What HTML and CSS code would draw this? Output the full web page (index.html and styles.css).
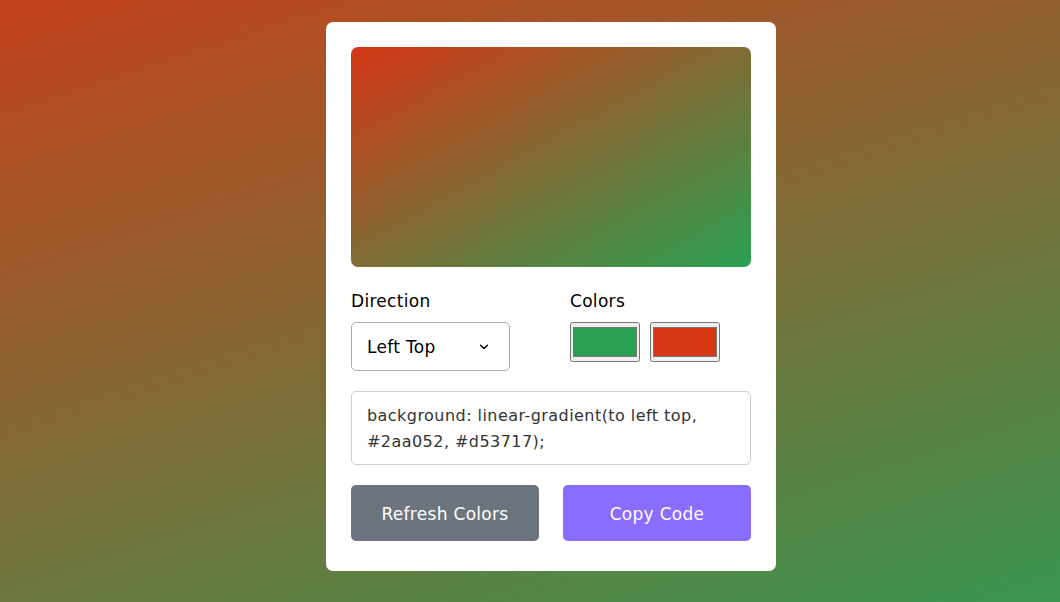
FILE: index.html
```html
<!DOCTYPE html>
<html lang="en">
<head>
<meta charset="utf-8">
<title>Gradient Generator</title>
<link rel="stylesheet" href="styles.css">
</head>
<body>
<div class="wrapper">
  <div class="gradient-box"></div>
  <div class="row options">
    <div class="column direction">
      <p class="label">Direction</p>
      <div class="select-box">
        <select>
          <option value="to top">Top</option>
          <option value="to right top">Right Top</option>
          <option value="to right">Right</option>
          <option value="to right bottom">Right Bottom</option>
          <option value="to bottom">Bottom</option>
          <option value="to left bottom">Left Bottom</option>
          <option value="to left">Left</option>
          <option value="to left top" selected>Left Top</option>
        </select>
        <svg class="chevron" width="10" height="6" viewBox="0 0 10 6"><path d="M1.5 1.2 5 4.6 8.5 1.2" fill="none" stroke="#000" stroke-width="1.4" stroke-linecap="round" stroke-linejoin="round"/></svg>
      </div>
    </div>
    <div class="column palette">
      <p class="label">Colors</p>
      <div class="colors">
        <input type="color" value="#2aa052">
        <input type="color" value="#d53717">
      </div>
    </div>
  </div>
  <textarea class="row" disabled>background: linear-gradient(to left top, #2aa052, #d53717);</textarea>
  <div class="row buttons">
    <button class="refresh">Refresh Colors</button>
    <button class="copy">Copy Code</button>
  </div>
</div>
</body>
</html>
```
FILE: styles.css
```css
* {
  margin: 0;
  padding: 0;
  box-sizing: border-box;
  font-family: "DejaVu Sans", "Inter", sans-serif;
}
body {
  min-height: 100vh;
  display: flex;
  justify-content: center;
  align-items: flex-start;
  padding: 22px 0 0 42px;
  background: linear-gradient(162deg, #c4421d, #3a9550);
}
.wrapper {
  width: 450px;
  background: #fff;
  border-radius: 7px;
  padding: 25px 25px 30px;
}
.gradient-box {
  height: 220px;
  width: 100%;
  border-radius: 7px;
  background: linear-gradient(to left top, #2aa052, #d53717);
}
.row {
  display: flex;
  margin-top: 20px;
  justify-content: space-between;
}
.options .column {
  width: 159px;
}
.options .palette {
  width: 181px;
}
.label {
  font-size: 17px;
  letter-spacing: 0.3px;
  color: #000;
  margin-bottom: 9px;
  line-height: 24px;
  padding-top: 2px;
}
.select-box {
  height: 49px;
  border: 1px solid #aaa;
  border-radius: 5px;
  display: flex;
  align-items: center;
  padding-right: 20px;
}
.select-box select {
  flex: 1;
  min-width: 0;
  height: 100%;
  border: none;
  outline: none;
  font-size: 17px;
  letter-spacing: 0.3px;
  background: none;
  padding-left: 15px;
  color: #000;
  appearance: none;
  -webkit-appearance: none;
}
.chevron {
  flex: none;
  margin-top: 1px;
}
.colors {
  display: flex;
  gap: 10px;
}
.colors input {
  width: 70px;
  height: 40px;
  cursor: pointer;
}
textarea {
  width: 100%;
  height: 74px;
  resize: none;
  font-size: 16px;
  letter-spacing: 0.45px;
  line-height: 26px;
  color: #333;
  background: #fff;
  padding: 11px 15px 9px;
  border: 1px solid #ccc;
  border-radius: 5px;
}
.buttons button {
  width: calc(100% / 2 - 12px);
  height: 56px;
  border: none;
  border-radius: 5px;
  color: #fff;
  font-size: 17px;
  letter-spacing: 0.3px;
  padding-top: 2px;
  cursor: pointer;
}
.buttons .refresh {
  background: #6c757d;
}
.buttons .copy {
  background: #8a6cff;
}
```
